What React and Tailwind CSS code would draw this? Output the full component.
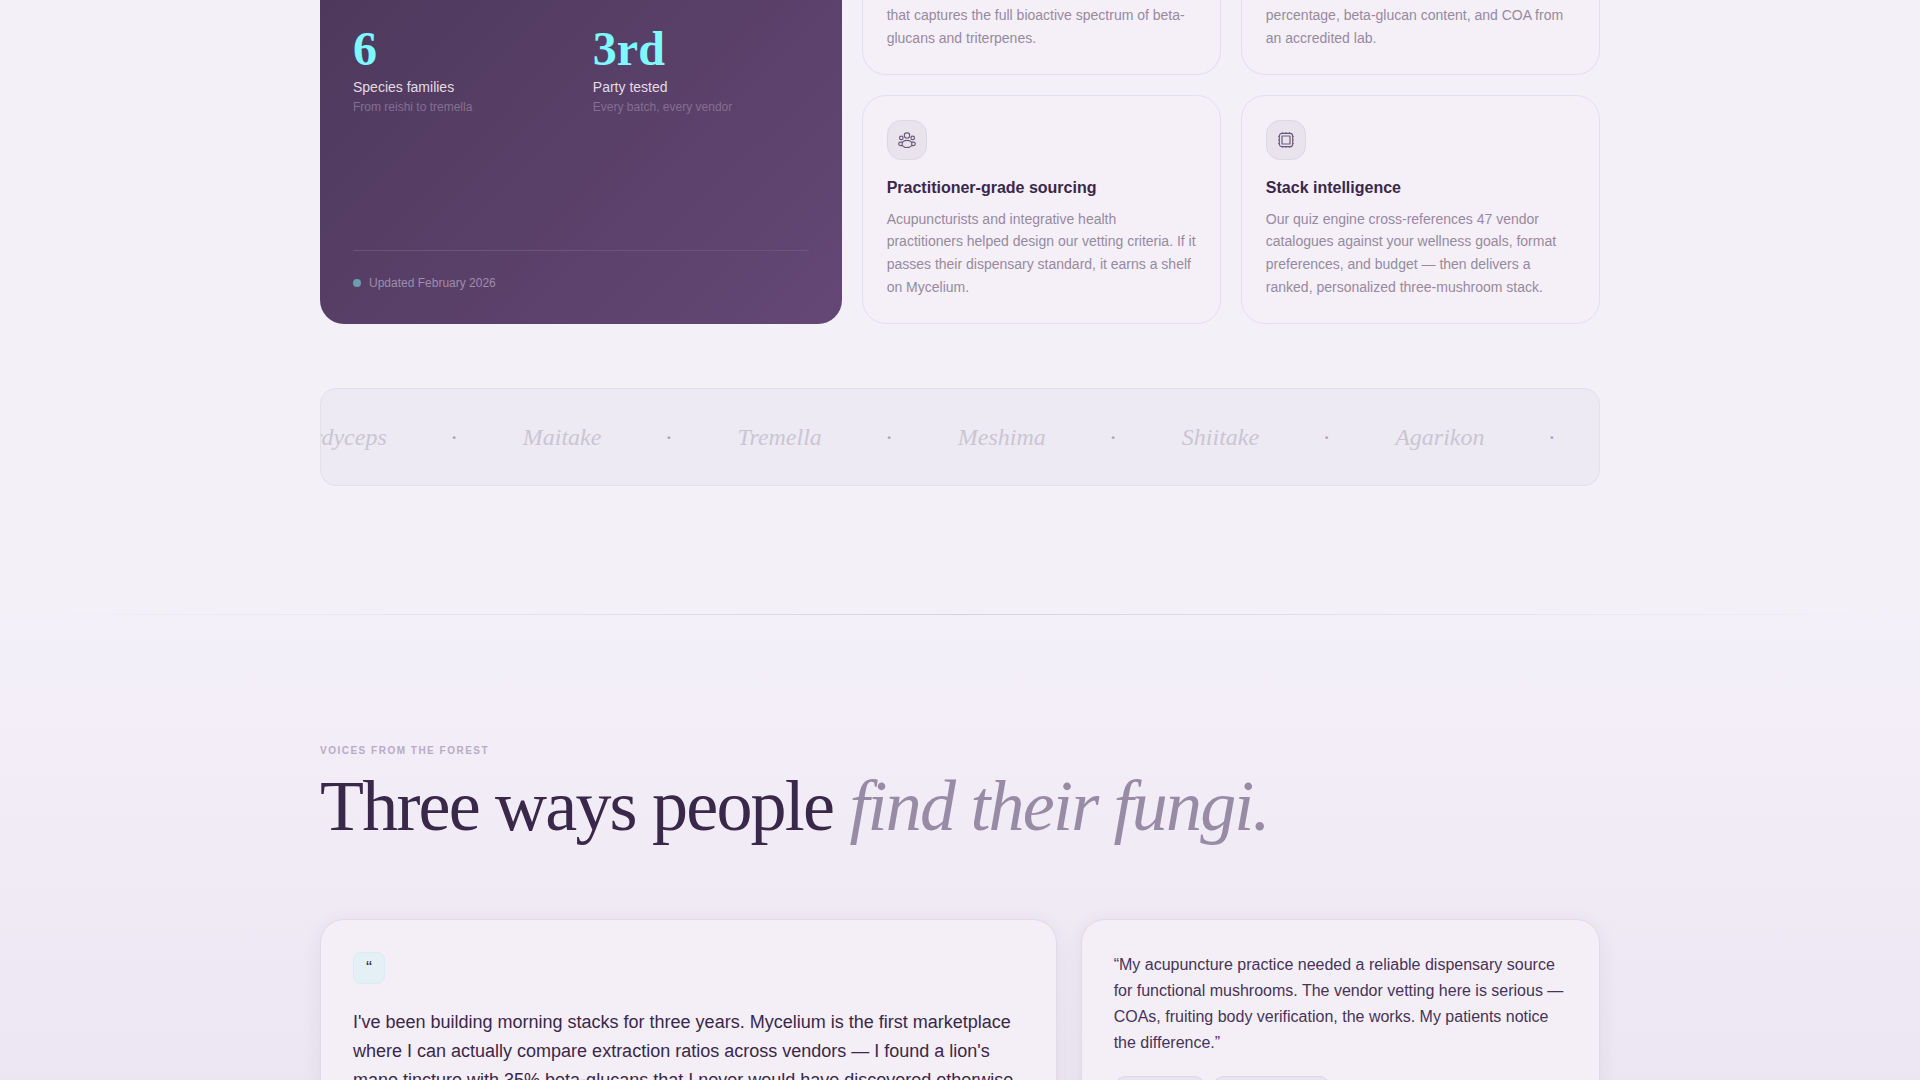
import React from 'react';

const features = [
  {
    title: 'Practitioner-grade sourcing',
    icon: PeopleIcon,
    text: 'Acupuncturists and integrative health practitioners helped design our vetting criteria. If it passes their dispensary standard, it earns a shelf on Mycelium.',
  },
  {
    title: 'Stack intelligence',
    icon: ChipIcon,
    text: 'Our quiz engine cross-references 47 vendor catalogues against your wellness goals, format preferences, and budget — then delivers a ranked, personalized three-mushroom stack.',
  },
];

const stats = [
  { value: '6', label: 'Species families', note: 'From reishi to tremella' },
  { value: '3rd', label: 'Party tested', note: 'Every batch, every vendor' },
];

const species = ['Cordyceps', 'Maitake', 'Tremella', 'Meshima', 'Shiitake', 'Agarikon'];

function PeopleIcon() {
  return (
    <svg width="20" height="20" viewBox="0 0 20 20" fill="none" stroke="currentColor" strokeWidth="1.2" aria-hidden="true">
      <rect x="7.4" y="2.8" width="5.2" height="5.2" rx="2.2" />
      <circle cx="4.3" cy="7.9" r="1.8" />
      <circle cx="15.7" cy="7.9" r="1.8" />
      <ellipse cx="10" cy="13.9" rx="4.9" ry="3.6" />
      <path d="M5.4 12.2H3.6c-1.1 0-1.9.8-1.9 1.7s.8 1.6 1.9 1.7h1.9M14.6 12.2h1.8c1.1 0 1.9.8 1.9 1.7s-.8 1.6-1.9 1.7h-1.9" />
    </svg>
  );
}

function ChipIcon() {
  return (
    <svg width="20" height="20" viewBox="0 0 20 20" fill="none" stroke="currentColor" strokeWidth="1.2" aria-hidden="true">
      <rect x="3.3" y="3.3" width="13.4" height="13.4" rx="2.8" />
      <rect x="6" y="6" width="8" height="8" rx=".3" />
      <path d="M6.5 2.3v1.2M10 2.3v1.2M13.5 2.3v1.2M6.5 16.5v1.2M10 16.5v1.2M13.5 16.5v1.2M2.3 6.5h1.2M2.3 10h1.2M2.3 13.5h1.2M16.5 6.5h1.2M16.5 10h1.2M16.5 13.5h1.2" />
    </svg>
  );
}

function StatsPanel() {
  return (
    <div className="col-span-5 flex flex-col justify-between rounded-b-3xl bg-linear-135 from-[#4e395c] to-[#644775] px-[33px] pt-[25px] pb-[33px]">
      <dl className="grid grid-cols-2 gap-6">
        {stats.map((s) => (
          <div key={s.label} className="flex flex-col">
            <dd className="font-['Liberation_Serif',serif] text-5xl leading-[48px] font-bold text-[#7df9ff]">{s.value}</dd>
            <dt className="mt-1 text-sm text-[#e2dce6]">{s.label}</dt>
            <dd className="mt-0.5 text-xs leading-4 text-[#846f90]">{s.note}</dd>
          </div>
        ))}
      </dl>
      <div className="flex items-center gap-2 border-t border-[#6b5479] pt-6 text-xs leading-4 text-[#9f8dab]">
        <span className="size-2 rounded-full bg-[#6a9fb3]" />
        Updated February 2026
      </div>
    </div>
  );
}

function FeatureCard({ title, icon: Icon, text }) {
  return (
    <article className="rounded-3xl border border-[#e4dfe8] bg-[#f5eff8] p-6">
      <div className="flex size-10 items-center justify-center rounded-[14px] border border-[#dfd8e4] bg-[#e9e3ed] text-[#6a5a78]">
        <Icon />
      </div>
      <h3 className="mt-4 text-base leading-6 font-bold text-[#3a284a]">{title}</h3>
      <p className="mt-2 text-sm leading-relaxed text-[#958a9f]">{text}</p>
    </article>
  );
}

function FeatureCardEnd({ children }) {
  return (
    <article className="rounded-b-3xl border border-t-0 border-[#e4dfe8] bg-[#f5eff8] px-6 pt-1 pb-6">
      <p className="text-sm leading-relaxed text-[#958a9f]">{children}</p>
    </article>
  );
}

function SpeciesMarquee() {
  return (
    <div className="mt-16 overflow-hidden rounded-2xl border border-[#e4dfe8] bg-[#edeaf4] py-8">
      <div className="-ml-9 flex gap-16 font-['Liberation_Serif',serif] text-2xl leading-8 whitespace-nowrap text-[#cbc5d2] italic">
        {species.map((name) => (
          <React.Fragment key={name}>
            <span>{name}</span>
            <span className="w-2 shrink-0 text-[#aaa1b5]">·</span>
          </React.Fragment>
        ))}
      </div>
    </div>
  );
}

export default function App() {
  return (
    <div className="h-screen overflow-hidden bg-[#f4f0f8] font-['Liberation_Sans',Arial,sans-serif]">
      <section className="px-8 pb-32">
        <div className="mx-auto max-w-7xl">
          <div className="grid grid-cols-12 gap-5">
            <StatsPanel />
            <div className="col-span-7 grid grid-cols-2 gap-5">
              <FeatureCardEnd>
                that captures the full bioactive spectrum of beta-glucans and triterpenes.
              </FeatureCardEnd>
              <FeatureCardEnd>
                percentage, beta-glucan content, and COA from an accredited lab.
              </FeatureCardEnd>
              {features.map((f) => (
                <FeatureCard key={f.title} {...f} />
              ))}
            </div>
          </div>
          <SpeciesMarquee />
        </div>
      </section>

      <section className="min-h-screen bg-linear-to-b from-[#f4f0f8] to-[#e2d9ec]">
        <div className="h-px bg-linear-to-r from-transparent via-[#d9d3df] to-transparent" />
        <div className="px-8 pt-32">
          <div className="mx-auto max-w-7xl">
            <p className="text-[10px] leading-4 font-bold tracking-[0.15em] text-[#b8abc9] uppercase">Voices from the forest</p>
            <h2 className="mt-[11px] font-['Liberation_Serif',serif] text-7xl leading-[72px] tracking-tight text-[#3a284a]">
              Three ways people <em className="text-[#988ba6]">find their fungi.</em>
            </h2>
            <div className="mt-[77px] grid grid-cols-12 items-start gap-6">
              <figure className="col-span-7 rounded-3xl border border-[#e2dbe7] bg-[#f4eef7] p-8 pb-16 shadow-[0_4px_20px_rgba(56,38,75,0.07)]">
                <div className="flex size-8 items-center justify-center rounded-lg border border-[#d6edf3] bg-[#e5f0f6] text-lg leading-5 text-[#3a284a]" aria-hidden="true">“</div>
                <blockquote className="mt-6 text-lg leading-relaxed text-[#3a284a]">
                  I've been building morning stacks for three years. Mycelium is the first marketplace where I can actually compare extraction ratios across vendors — I found a lion's mane tincture with 35% beta-glucans that I never would have discovered otherwise.
                </blockquote>
              </figure>
              <figure className="col-span-5 rounded-3xl border border-[#e2dbe7] bg-[#f4eef7] p-8 shadow-[0_4px_20px_rgba(56,38,75,0.07)]">
                <blockquote className="text-base leading-[26px] text-[#463459]">
                  “My acupuncture practice needed a reliable dispensary source for functional mushrooms. The vendor vetting here is serious — COAs, fruiting body verification, the works. My patients notice the difference.”
                </blockquote>
                <div className="mt-5 flex gap-1.5">
                  <span className="h-7 w-[92px] rounded-xl border border-[#dcd4e3] bg-[#eae4ef]" />
                  <span className="h-7 w-[119px] rounded-xl border border-[#dcd4e3] bg-[#eae4ef]" />
                </div>
              </figure>
            </div>
          </div>
        </div>
      </section>
    </div>
  );
}
